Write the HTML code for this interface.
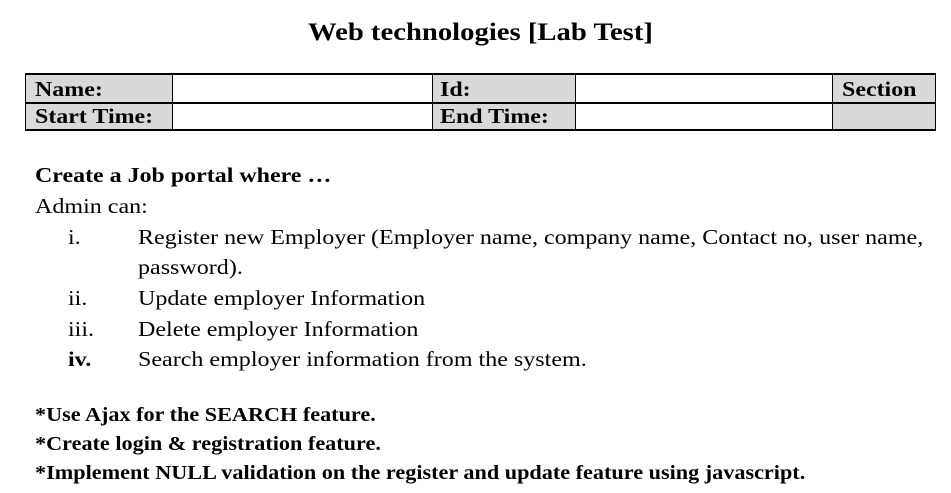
<!DOCTYPE html>
<html><head><meta charset="utf-8"><style>
body{margin:0;width:951px;height:493px;background:#fff;font-family:"Liberation Serif","DejaVu Serif",serif;color:#000;position:relative;overflow:hidden}
.t{position:absolute;white-space:nowrap;transform-origin:0 0}
.b{font-weight:bold}
.g{position:absolute;background:#d9d9d9}
.h{position:absolute;height:2px;background:#000}
.v{position:absolute;width:1px;background:#000}
.s{font-size:21px;transform:scaleX(1.145)}
.sb{font-size:21px;transform:scaleX(1.14)}
.f{font-size:20px;transform:scaleX(1.11)}
</style></head><body>
<div class="t b" style="left:308px;top:19px;font-size:25px;transform:scaleX(1.147)">Web technologies [Lab Test]</div>

<div class="g" style="left:25px;top:75px;width:147px;height:55px"></div>
<div class="g" style="left:432px;top:75px;width:143px;height:55px"></div>
<div class="g" style="left:832px;top:75px;width:103px;height:55px"></div>
<div class="h" style="left:25px;top:73px;width:910px"></div>
<div class="h" style="left:25px;top:102px;width:910px"></div>
<div class="h" style="left:25px;top:129px;width:910px"></div>
<div class="v" style="left:25px;top:73px;height:58px"></div>
<div class="v" style="left:172px;top:73px;height:58px"></div>
<div class="v" style="left:432px;top:73px;height:58px"></div>
<div class="v" style="left:575px;top:73px;height:58px"></div>
<div class="v" style="left:832px;top:73px;height:58px"></div>
<div class="v" style="left:935px;top:73px;height:58px"></div>
<div class="t b sb" style="left:35px;top:77px">Name:</div>
<div class="t b sb" style="left:440px;top:77px">Id:</div>
<div class="t b sb" style="left:842px;top:77px">Section</div>
<div class="t b sb" style="left:35px;top:104px">Start Time:</div>
<div class="t b sb" style="left:440px;top:104px">End Time:</div>

<div class="t b sb" style="left:35px;top:163px">Create a Job portal where …</div>
<div class="t s" style="left:35px;top:194px">Admin can:</div>
<div class="t s" style="left:68px;top:225px">i.</div>
<div class="t s" style="left:138px;top:225px">Register new Employer (Employer name, company name, Contact no, user name,</div>
<div class="t s" style="left:138px;top:255px">password).</div>
<div class="t s" style="left:68px;top:286px">ii.</div>
<div class="t s" style="left:138px;top:286px">Update employer Information</div>
<div class="t s" style="left:68px;top:317px">iii.</div>
<div class="t s" style="left:138px;top:317px">Delete employer Information</div>
<div class="t b s" style="left:68px;top:347px">iv.</div>
<div class="t s" style="left:138px;top:347px">Search employer information from the system.</div>

<div class="t b f" style="left:35px;top:404px">*Use Ajax for the SEARCH feature.</div>
<div class="t b f" style="left:35px;top:433px">*Create login &amp; registration feature.</div>
<div class="t b f" style="left:35px;top:462px">*Implement NULL validation on the register and update feature using javascript.</div>
</body></html>
